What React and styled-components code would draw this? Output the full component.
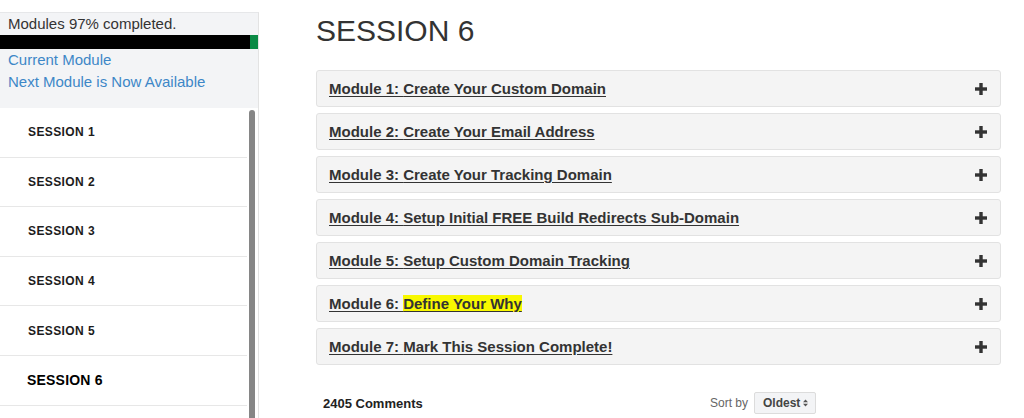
import React from 'react';
import styled, { createGlobalStyle } from 'styled-components';

const GlobalStyle = createGlobalStyle`
  html, body {
    margin: 0;
    padding: 0;
    overflow: hidden;
    background: #fff;
    font-family: "Liberation Sans", Arial, sans-serif;
    color: #333;
  }
`;

const Page = styled.div`
  display: flex;
  align-items: flex-start;
  height: 418px;
`;

const Sidebar = styled.aside`
  width: 258px;
  margin-top: 12px;
  border-top: 1px solid #e6e7e9;
  border-right: 1px solid #e3e3e3;
  display: flex;
  flex-direction: column;
  height: 420px;
  flex-shrink: 0;
`;

const Status = styled.div`
  background: #f3f4f6;
  padding: 0 0 15px;
`;

const StatusText = styled.div`
  font-size: 15px;
  line-height: 22px;
  padding-left: 8px;
  color: #333;
`;

const ProgressTrack = styled.div`
  height: 14px;
  background: #0a8a45;
  display: flex;
`;

const ProgressFill = styled.div`
  background: #000;
  height: 100%;
`;

const SideLink = styled.a`
  display: block;
  font-size: 15px;
  line-height: 22px;
  padding-left: 8px;
  color: #3d87c7;
  text-decoration: none;
`;

const ListArea = styled.div`
  display: flex;
  flex: 1;
  background: #fff;
`;

const SessionList = styled.ul`
  list-style: none;
  margin: 0;
  padding: 0;
  width: 247px;
`;

const SessionItem = styled.li`
  height: 48.6px;
  border-bottom: 1px solid #e7e7e7;
  display: flex;
  align-items: center;
  padding-left: ${p => (p.$active ? '27px' : '28px')};
  font-weight: bold;
  font-size: ${p => (p.$active ? '14px' : '12px')};
  letter-spacing: ${p => (p.$active ? '0.2px' : '0.4px')};
  color: ${p => (p.$active ? '#000' : '#1c1c1c')};
`;

const ScrollThumb = styled.div`
  width: 6px;
  margin: 2px 2px 0 2px;
  background: #868686;
  border-radius: 3px 3px 0 0;
`;

const Main = styled.main`
  flex: 1;
  padding: 0 23px 0 57px;
`;

const Heading = styled.h1`
  margin: 14px 0 23px;
  font-size: 30px;
  line-height: 33px;
  font-weight: normal;
  color: #333;
`;

const ModuleList = styled.div`
  display: flex;
  flex-direction: column;
  gap: 6px;
`;

const ModulePanel = styled.div`
  height: 35px;
  background: #f4f4f4;
  border: 1px solid #e2e2e2;
  border-radius: 3px;
  display: flex;
  align-items: center;
  justify-content: space-between;
  padding: 0 13px 0 12px;
`;

const ModuleTitle = styled.a`
  font-size: 15px;
  font-weight: bold;
  color: #333;
  text-decoration: underline;
  text-underline-offset: 2px;
`;

const Highlight = styled.span`
  background: #f8f800;
`;

const CommentsBar = styled.div`
  display: flex;
  align-items: center;
  margin-top: 27px;
  padding-left: 7px;
  height: 22px;
`;

const CommentCount = styled.div`
  width: 387px;
  font-size: 13px;
  font-weight: bold;
  color: #222;
`;

const SortLabel = styled.span`
  font-size: 12px;
  color: #666;
  margin-right: 6px;
`;

const SortButton = styled.button`
  height: 22px;
  padding: 0 7px 0 8px;
  background: #f3f4f6;
  border: 1px solid #dcdcdc;
  border-radius: 2px;
  font-family: inherit;
  font-size: 12px;
  font-weight: bold;
  color: #444;
  display: flex;
  align-items: center;
  gap: 3px;
`;

const Plus = () => (
  <svg width="12" height="12" viewBox="0 0 12 12">
    <rect x="0" y="4.3" width="12" height="3.4" fill="#333" />
    <rect x="4.3" y="0" width="3.4" height="12" fill="#333" />
  </svg>
);

const SortArrows = () => (
  <svg width="5" height="8" viewBox="0 0 5 8">
    <path d="M0 3.2 L2.5 0.5 L5 3.2 Z" fill="#555" />
    <path d="M0 4.8 L2.5 7.5 L5 4.8 Z" fill="#555" />
  </svg>
);

const sessions = ['SESSION 1', 'SESSION 2', 'SESSION 3', 'SESSION 4', 'SESSION 5', 'SESSION 6'];

const modules = [
  { label: 'Module 1: ', title: 'Create Your Custom Domain' },
  { label: 'Module 2: ', title: 'Create Your Email Address' },
  { label: 'Module 3: ', title: 'Create Your Tracking Domain' },
  { label: 'Module 4: ', title: 'Setup Initial FREE Build Redirects Sub-Domain' },
  { label: 'Module 5: ', title: 'Setup Custom Domain Tracking' },
  { label: 'Module 6: ', title: 'Define Your Why', marked: true },
  { label: 'Module 7: ', title: 'Mark This Session Complete!' },
];

export default function App() {
  const progress = 97;

  return (
    <>
      <GlobalStyle />
      <Page>
        <Sidebar>
          <Status>
            <StatusText>Modules {progress}% completed.</StatusText>
            <ProgressTrack>
              <ProgressFill style={{ width: `${progress}%` }} />
            </ProgressTrack>
            <SideLink href="#">Current Module</SideLink>
            <SideLink href="#">Next Module is Now Available</SideLink>
          </Status>
          <ListArea>
            <SessionList>
              {sessions.map((s, i) => (
                <SessionItem key={s} $active={i === 5}>{s}</SessionItem>
              ))}
            </SessionList>
            <ScrollThumb />
          </ListArea>
        </Sidebar>
        <Main>
          <Heading>SESSION 6</Heading>
          <ModuleList>
            {modules.map(m => (
              <ModulePanel key={m.label}>
                <ModuleTitle href="#">
                  {m.label}
                  {m.marked ? <Highlight>{m.title}</Highlight> : m.title}
                </ModuleTitle>
                <Plus />
              </ModulePanel>
            ))}
          </ModuleList>
          <CommentsBar>
            <CommentCount>2405 Comments</CommentCount>
            <SortLabel>Sort by</SortLabel>
            <SortButton>
              Oldest <SortArrows />
            </SortButton>
          </CommentsBar>
        </Main>
      </Page>
    </>
  );
}
